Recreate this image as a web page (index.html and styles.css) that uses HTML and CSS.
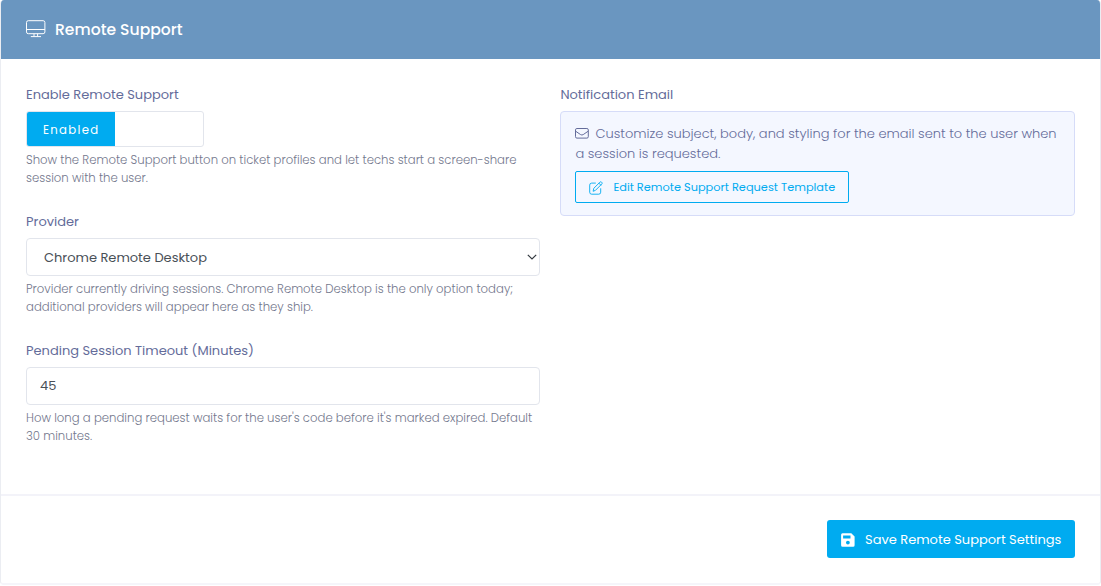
FILE: index.html
```html
<!DOCTYPE html>
<html lang="en">
  <head>
    <meta charset="UTF-8" />
    <meta name="viewport" content="width=device-width, initial-scale=1.0" />
    <title>Remote Support</title>
    <link rel="stylesheet" href="styles.css">
  </head>
  <body>
    <form class="card">
      <header class="card-header">
        <svg class="icon-display" width="20" height="18" viewBox="0 0 20 18" fill="none" stroke="currentColor">
          <rect x="0.5" y="0.7" width="18.4" height="13" rx="1.8" />
          <path d="M0.5 9.5h18.4M8 13.7v2.6M11.6 13.7v2.6M4.8 16.6h10.2" />
        </svg>
        <h1 class="card-title">Remote Support</h1>
      </header>

      <div class="card-body">
        <div class="column">
          <div class="form-group">
            <label class="label">Enable Remote Support</label>
            <div class="toggle"><span class="toggle-on">Enabled</span></div>
            <p class="help">Show the Remote Support button on ticket profiles and let techs start a screen-share session with the user.</p>
          </div>
          <div class="form-group">
            <label class="label" for="provider">Provider</label>
            <div class="select-box">
              <select class="input select" id="provider">
                <option>Chrome Remote Desktop</option>
              </select>
              <svg class="chevron" width="10" height="6" viewBox="0 0 10 6" fill="none" stroke="currentColor" stroke-width="1.2">
                <path d="M0.8 0.8L5 5L9.2 0.8" />
              </svg>
            </div>
            <p class="help">Provider currently driving sessions. Chrome Remote Desktop is the only option today; additional providers will appear here as they ship.</p>
          </div>
          <div class="form-group">
            <label class="label" for="timeout">Pending Session Timeout (Minutes)</label>
            <input class="input" id="timeout" type="text" value="45" />
            <p class="help">How long a pending request waits for the user's code before it's marked expired. Default 30 minutes.</p>
          </div>
        </div>

        <div class="column">
          <label class="label">Notification Email</label>
          <div class="notice">
            <p class="notice-text">
              <svg class="icon-mail" width="14" height="11" viewBox="0 0 14 11" fill="none" stroke="currentColor">
                <rect x="0.5" y="0.5" width="12.8" height="9.6" rx="1.4" />
                <path d="M0.6 3.2L5.6 6.6Q6.9 7.4 8.2 6.6L13.2 3.2" />
              </svg>Customize subject, body, and styling for the email sent to the user when a session is requested.
            </p>
            <button class="button-outline" type="button">
              <svg class="icon-edit" width="14" height="14" viewBox="0 0 14 14" fill="none" stroke="currentColor" stroke-width="0.9" stroke-linejoin="round" stroke-linecap="round">
                <path d="M6.4 2.1H2.7Q0.7 2.1 0.7 4.1V11.2Q0.7 13.2 2.7 13.2H9.7Q11.7 13.2 11.7 11.2V7.7" />
                <path d="M4.2 9.9L4.8 7.3L11 1.1Q11.7 0.4 12.5 1.1L12.9 1.5Q13.5 2.2 12.9 2.9L6.7 9.1ZM9.9 2.2L11.8 4.1" />
              </svg>
              Edit Remote Support Request Template
            </button>
          </div>
        </div>
      </div>

      <footer class="card-footer">
        <button class="button-save" type="button">
          <svg width="14" height="14" viewBox="0 0 14 14" fill="currentColor">
            <path fill-rule="evenodd" d="M1.5 0.2H10.3L13.6 3.5V12.3Q13.6 13.8 12.1 13.8H1.6Q0.1 13.8 0.1 12.3V1.7Q0.1 0.2 1.5 0.2ZM2.1 2.4V5.4H9.5V2.4ZM6.9 7.7A1.9 1.9 0 1 0 6.9 11.5A1.9 1.9 0 1 0 6.9 7.7Z" />
          </svg>
          Save Remote Support Settings
        </button>
      </footer>
    </form>
  </body>
</html>
```
FILE: styles.css
```css
* {
  box-sizing: border-box;
}
body {
  margin: 0;
  background: #fff;
  font-family: Poppins, Inter, sans-serif;
  font-size: 13px;
  color: #646c9a;
}
h1,
p {
  margin: 0;
}
svg {
  flex: none;
}
.card {
  height: 585px;
  border: 1px solid #ebedf2;
  border-top: 0;
  border-bottom: 2px solid #f5f5fa;
  border-radius: 4px;
  overflow: hidden;
}
.card-header {
  display: flex;
  align-items: center;
  gap: 9px;
  height: 59px;
  padding: 0 25px;
  background: #6a96c0;
  color: #fff;
}
.icon-display {
  margin-bottom: 1px;
}
.card-title {
  font-size: 15.6px;
  font-weight: 500;
  line-height: 24px;
}
.card-body {
  display: grid;
  grid-template-columns: 514px 514.6px;
  gap: 20.4px;
  height: 435px;
  padding: 26px 25px 0;
}
.form-group {
  margin-bottom: 25px;
}
.label {
  display: block;
  height: 20px;
  margin-bottom: 6px;
  line-height: 20px;
}
.help {
  margin-top: 5px;
  font-size: 11.7px;
  font-weight: 300;
  line-height: 17.5px;
  color: #74788d;
}
.toggle {
  width: 178px;
  height: 36px;
  border: 1px solid #e2e5ec;
  border-radius: 3px;
  overflow: hidden;
}
.toggle-on {
  display: block;
  width: 88px;
  height: 34px;
  padding-left: 16px;
  background: #00abf0;
  color: #fff;
  font-size: 11.7px;
  line-height: 36px;
  letter-spacing: 1.3px;
}
.input {
  display: block;
  width: 100%;
  height: 38px;
  padding: 0 13px;
  border: 1px solid #e2e5ec;
  border-radius: 4px;
  background: #fff;
  color: #495057;
  font: inherit;
}
.select-box {
  position: relative;
}
.select {
  padding: 0 17px;
  appearance: none;
}
.chevron {
  position: absolute;
  top: 16px;
  right: 3px;
  color: #343a40;
}
.notice {
  height: 105px;
  padding: 12px 14px;
  border: 1px solid #d6dcf8;
  border-radius: 4px;
  background: #f4f7ff;
}
.notice-text {
  height: 40px;
  margin-bottom: 7px;
  font-weight: 300;
  line-height: 20px;
}
.icon-mail {
  margin-right: 6px;
  vertical-align: -1px;
}
.button-outline {
  display: flex;
  align-items: center;
  gap: 10px;
  width: 274px;
  height: 32px;
  padding: 0 13px;
  border: 1px solid #00abf0;
  border-radius: 2px;
  background: transparent;
  color: #00abf0;
  font: inherit;
  font-size: 11.375px;
  white-space: nowrap;
}
.icon-edit {
  margin-top: 2px;
}
.card-footer {
  display: flex;
  justify-content: flex-end;
  padding: 24px 25px 0;
  border-top: 2px solid #f3f3f9;
}
.button-save {
  display: flex;
  align-items: center;
  gap: 10px;
  width: 248px;
  height: 38px;
  padding: 2px 14px 0;
  border: 0;
  border-radius: 3px;
  background: #00abf0;
  color: #fff;
  font: inherit;
  white-space: nowrap;
}
```
